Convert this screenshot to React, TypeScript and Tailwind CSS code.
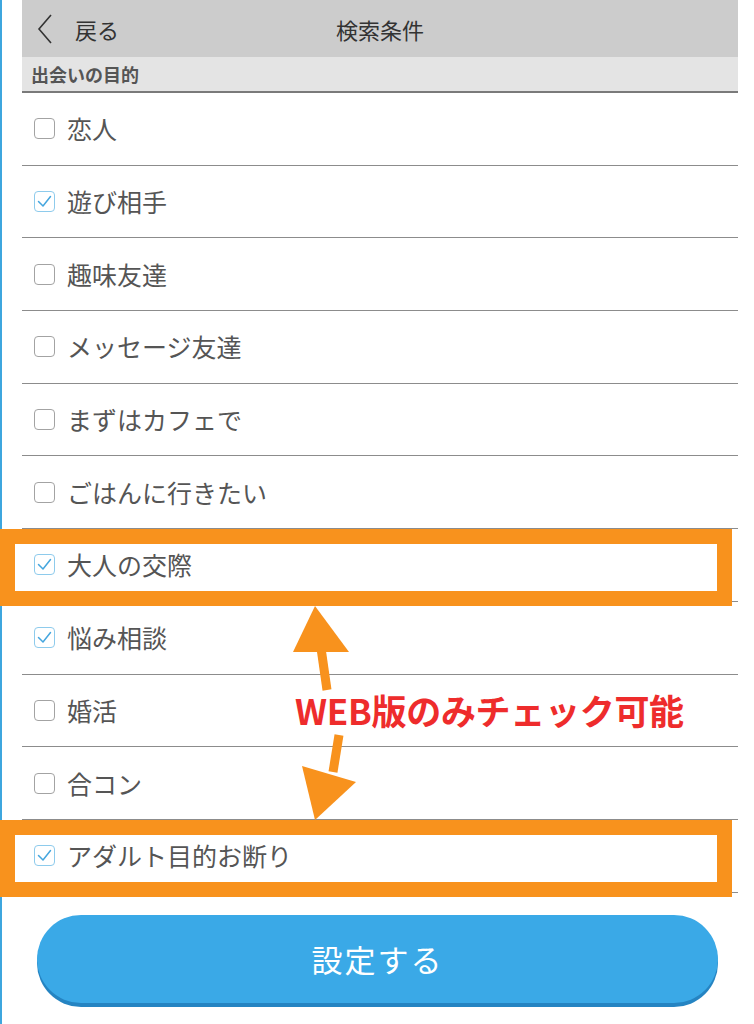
import React from 'react';

const purposes = [
  { label: '恋人', checked: false },
  { label: '遊び相手', checked: true },
  { label: '趣味友達', checked: false },
  { label: 'メッセージ友達', checked: false },
  { label: 'まずはカフェで', checked: false },
  { label: 'ごはんに行きたい', checked: false },
  { label: '大人の交際', checked: true },
  { label: '悩み相談', checked: true },
  { label: '婚活', checked: false },
  { label: '合コン', checked: false },
  { label: 'アダルト目的お断り', checked: true },
];

const CheckBox = ({ checked }: { checked: boolean }) =>
  checked ? (
    <span className="w-[21px] h-[21px] rounded-[4px] border-[1.5px] border-[#8ecbec] bg-white flex items-center justify-center shrink-0">
      <svg width="17" height="17" viewBox="0 0 17 17" fill="none">
        <polyline points="2.5,8.5 7,13 14.5,3.5" stroke="#45a6de" strokeWidth="1.5" strokeLinecap="round" strokeLinejoin="round" />
      </svg>
    </span>
  ) : (
    <span className="w-[21px] h-[21px] rounded-[4px] border-[1.5px] border-[#a3a3a3] bg-white shrink-0" />
  );

export default function App() {
  return (
    <div
      className="relative w-[754px] h-[1024px] bg-white overflow-hidden flex"
      style={{ fontFamily: '"Noto Sans CJK JP", "Noto Sans", sans-serif' }}
    >
      {/* left edge */}
      <div className="w-[22px] shrink-0 flex">
        <div className="w-[2px] bg-[#3ea6de]" />
      </div>

      {/* main column */}
      <div className="w-[716px] shrink-0 flex flex-col">
        {/* Header */}
        <div className="h-[57px] bg-[#cccccc] grid grid-cols-[1fr_auto_1fr] items-center">
          <div className="flex items-center pl-[14px]">
            <svg width="18" height="30" viewBox="0 0 18 30" fill="none">
              <polyline points="15,1 3,15 15,29" stroke="#333333" strokeWidth="1.6" strokeLinejoin="miter" />
            </svg>
            <span className="ml-[21px] text-[22px] text-[#333333] leading-none">戻る</span>
          </div>
          <div className="text-[22px] text-[#333333] leading-none">検索条件</div>
          <div />
        </div>

        {/* Section title */}
        <div className="h-[36px] bg-[#e4e4e4] border-b-2 border-[#7a7a7a] flex items-center pl-[9px]">
          <span className="text-[18px] font-bold text-[#555555] leading-none">出会いの目的</span>
        </div>

        {/* Options */}
        <div className="flex flex-col">
          {purposes.map((p) => (
            <div
              key={p.label}
              className="h-[72.7px] border-b border-[#8c8c8c] flex items-center pl-[12px] gap-[12px]"
            >
              <CheckBox checked={p.checked} />
              <span className="text-[25px] text-[#555555] leading-none">{p.label}</span>
            </div>
          ))}
        </div>

        {/* Button */}
        <div className="pt-[22px] pl-[15px]">
          <button className="w-[681px] h-[88px] rounded-full bg-[#3aa9e7] shadow-[0_4px_0_#2584c2] flex items-center justify-center">
            <span className="text-[31px] text-white leading-none tracking-[2px]">設定する</span>
          </button>
        </div>
      </div>

      {/* Annotations */}
      <div className="absolute left-0 top-[529px] w-[732px] h-[77px] border-[15px] border-[#f8921d] pointer-events-none" />
      <div className="absolute left-0 top-[820px] w-[732px] h-[77px] border-[15px] border-[#f8921d] pointer-events-none" />

      <svg className="absolute left-0 top-0 pointer-events-none" width="754" height="1024" viewBox="0 0 754 1024">
        <line x1="327" y1="690" x2="321" y2="648" stroke="#f8921d" strokeWidth="9" />
        <polygon points="315,606 293,652 349,652" fill="#f8921d" />
        <line x1="339" y1="735" x2="333" y2="772" stroke="#f8921d" strokeWidth="9" />
        <polygon points="302,766 356,782 315,820" fill="#f8921d" />
      </svg>

      <div className="absolute left-[295px] top-[692px] text-[35px] font-bold text-[#ee2c2c] leading-none tracking-[-0.3px]">
        WEB版のみチェック可能
      </div>
    </div>
  );
}
